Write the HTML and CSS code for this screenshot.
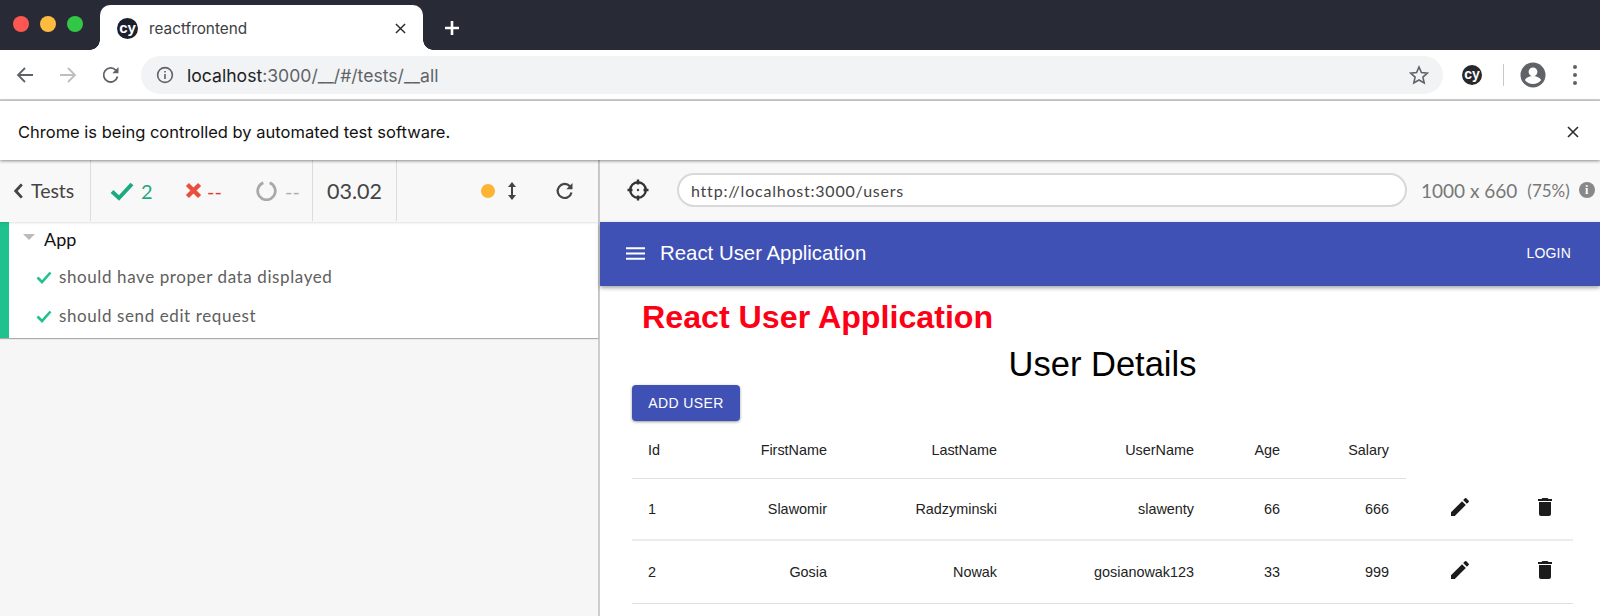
FILE: index.html
```html
<!DOCTYPE html>
<html lang="en">
<head>
<meta charset="utf-8">
<title>reactfrontend</title>
<link rel="stylesheet" href="styles.css">
</head>
<body>
<header class="tabstrip">
  <div class="lights"><i class="light red"></i><i class="light amber"></i><i class="light green"></i></div>
  <div class="tab">
    <span class="cy fav">cy</span>
    <span class="tab-title">reactfrontend</span>
    <svg class="tab-x" viewBox="0 0 12 12"><path d="M1 1l10 10M11 1L1 11"/></svg>
  </div>
  <svg class="plus" viewBox="0 0 16 16"><path d="M8 1v14M1 8h14"/></svg>
</header>
<div class="toolbar">
  <svg class="nav-ic" viewBox="0 0 20 20"><path d="M18 10H3M10 3l-7 7 7 7"/></svg>
  <svg class="nav-ic off" viewBox="0 0 20 20"><path d="M2 10h15M10 3l7 7-7 7"/></svg>
  <svg class="nav-ic" viewBox="0 0 20 20"><path d="M16.500 11.500a7 7 0 1 1-1.600-6.200"/><path class="fill" d="M17.500 2v6.200h-6.200z"/></svg>
  <div class="omnibox">
    <svg class="info" viewBox="0 0 20 20"><circle cx="10" cy="10" r="8.200"/><path d="M10 9v5.500M10 5.500v1.700"/></svg>
    <span class="url"><b>localhost</b>:3000/__/#/tests/__all</span>
    <svg class="star" viewBox="0 0 20 20"><path d="M10 2l2.400 5.500 6 .6-4.500 4 1.300 5.900-5.200-3-5.200 3 1.300-5.900-4.500-4 6-.6z"/></svg>
  </div>
  <span class="cy ext">cy</span>
  <i class="tool-sep"></i>
  <svg class="avatar" viewBox="0 0 26 26"><circle class="av-bg" cx="13" cy="13" r="12.500"/><circle class="av-fg" cx="13" cy="9.800" r="4.400"/><path class="av-fg" d="M4.800 18c2-3 5-4 8.200-4s6.200 1 8.200 4c-2 2.600-5 4-8.200 4s-6.200-1.400-8.200-4z"/></svg>
  <div class="dots"><i></i><i></i><i></i></div>
</div>
<div class="infobar">
  <span>Chrome is being controlled by automated test software.</span>
  <svg class="info-x" viewBox="0 0 12 12"><path d="M1 1l10 10M11 1L1 11"/></svg>
</div>
<main class="cypress">
  <section class="runner">
    <div class="stats">
      <div class="cell back">
        <svg class="chev" viewBox="0 0 10 16"><path d="M8 2L2.500 8 8 14"/></svg>
        <span>Tests</span>
      </div>
      <div class="cell counts">
        <svg class="st-check" viewBox="0 0 24 20"><path d="M2 10.500l7 6.500L22 3"/></svg>
        <span class="n-pass">2</span>
        <svg class="st-x" viewBox="0 0 14 14"><path d="M2 2l10 10M12 2L2 12"/></svg>
        <span class="n-fail">--</span>
        <svg class="st-spin" viewBox="0 0 20 20"><path d="M7 2.600a8.400 8.400 0 1 0 6 0"/></svg>
        <span class="n-pend">--</span>
      </div>
      <div class="cell time">03.02</div>
      <div class="cell controls">
        <i class="dot"></i>
        <svg class="updown" viewBox="0 0 10 20"><path class="fill" d="M5 1l4 5H1zM5 19l4-5H1z"/><path d="M5 5v10"/></svg>
        <svg class="rerun" viewBox="0 0 20 20"><path d="M16.500 11.500a7 7 0 1 1-1.600-6.200"/><path class="fill" d="M17.500 2v6.200h-6.200z"/></svg>
      </div>
    </div>
    <div class="suite">
      <div class="suite-head"><i class="caret"></i><span>App</span></div>
      <div class="test"><svg class="t-check" viewBox="0 0 16 14"><path d="M1.500 7.500l4.500 4.500L14.500 2.500"/></svg><span>should have proper data displayed</span></div>
      <div class="test"><svg class="t-check" viewBox="0 0 16 14"><path d="M1.500 7.500l4.500 4.500L14.500 2.500"/></svg><span>should send edit request</span></div>
    </div>
  </section>
  <section class="preview">
    <div class="aut-bar">
      <svg class="target" viewBox="0 0 22 22"><circle cx="11" cy="11" r="7.800"/><path d="M11 0.500v5M11 16.500v5M0.500 11h5M16.500 11h5"/><circle class="fill" cx="11" cy="11" r="1.200"/></svg>
      <div class="aut-url">http://localhost:3000/users</div>
      <span class="dims">1000 x 660</span>
      <span class="scale">(75%)</span>
      <span class="i-badge">i</span>
    </div>
    <div class="app">
      <div class="appbar">
        <svg class="burger" viewBox="0 0 19 13"><path d="M0 1.250h19M0 6.500h19M0 11.750h19"/></svg>
        <span class="app-title">React User Application</span>
        <span class="login">LOGIN</span>
      </div>
      <div class="content">
        <h1 class="brand">React User Application</h1>
        <h2 class="details">User Details</h2>
        <button class="add">ADD USER</button>
        <table class="users">
          <thead>
            <tr><th class="c-id">Id</th><th class="c-first">FirstName</th><th class="c-last">LastName</th><th class="c-user">UserName</th><th class="c-age">Age</th><th class="c-sal">Salary</th></tr>
          </thead>
          <tbody>
            <tr>
              <td class="c-id">1</td><td>Slawomir</td><td>Radzyminski</td><td>slawenty</td><td>66</td><td>666</td>
              <td class="c-edit"><svg class="act" viewBox="0 0 24 24"><path d="M3 17.250V21h3.750L17.810 9.940l-3.750-3.750L3 17.250zM20.710 7.040a1 1 0 0 0 0-1.410l-2.340-2.340a1 1 0 0 0-1.410 0l-1.830 1.830 3.750 3.750 1.830-1.830z"/></svg></td>
              <td class="c-del"><svg class="act" viewBox="0 0 24 24"><path d="M6 19c0 1.100.9 2 2 2h8c1.100 0 2-.9 2-2V7H6v12zM19 4h-3.500l-1-1h-5l-1 1H5v2h14V4z"/></svg></td>
            </tr>
            <tr>
              <td class="c-id">2</td><td>Gosia</td><td>Nowak</td><td>gosianowak123</td><td>33</td><td>999</td>
              <td class="c-edit"><svg class="act" viewBox="0 0 24 24"><path d="M3 17.250V21h3.750L17.810 9.940l-3.750-3.750L3 17.250zM20.710 7.040a1 1 0 0 0 0-1.410l-2.340-2.340a1 1 0 0 0-1.410 0l-1.830 1.830 3.750 3.750 1.830-1.830z"/></svg></td>
              <td class="c-del"><svg class="act" viewBox="0 0 24 24"><path d="M6 19c0 1.100.9 2 2 2h8c1.100 0 2-.9 2-2V7H6v12zM19 4h-3.500l-1-1h-5l-1 1H5v2h14V4z"/></svg></td>
            </tr>
          </tbody>
        </table>
      </div>
    </div>
  </section>
</main>
</body>
</html>
```
FILE: styles.css
```css
* { box-sizing: border-box; }
html, body { margin: 0; height: 616px; overflow: hidden; }
body { background: #fff; font-family: Inter, "Liberation Sans", sans-serif; display: flex; flex-direction: column; }
svg { display: block; flex: none; fill: none; }
i { display: block; flex: none; }

/* tab strip */
.tabstrip { height: 50px; background: #282a35; display: flex; align-items: flex-end; flex: none; }
.lights { width: 100px; height: 50px; display: flex; gap: 11px; padding: 16px 0 0 13px; }
.light { width: 16px; height: 16px; border-radius: 50%; }
.red { background: #fc5753; }
.amber { background: #fdbc40; }
.green { background: #33c748; }
.tab { position: relative; width: 323px; height: 45px; background: #fff; border-radius: 10px 10px 0 0; display: flex; align-items: center; padding: 1px 0 0 17px; }
.tab::before, .tab::after { content: ""; position: absolute; bottom: 0; width: 10px; height: 10px; background: radial-gradient(circle at 0 0, #282a35 9.500px, #fff 10px); }
.tab::before { left: -10px; }
.tab::after { right: -10px; background: radial-gradient(circle at 100% 0, #282a35 9.500px, #fff 10px); }
.cy { display: flex; align-items: center; justify-content: center; border-radius: 50%; background: #1b1e2e; color: #fff; font-family: "Liberation Sans", sans-serif; font-weight: 700; flex: none; }
.fav { width: 21px; height: 21px; font-size: 15px; padding-bottom: 2px; }
.tab-title { margin-left: 11px; font-size: 15.300px; color: #3c4043; flex: 1; }
.tab-x { width: 11px; height: 11px; margin-right: 17px; stroke: #2a2c30; stroke-width: 1.600; }
.plus { width: 16px; height: 16px; margin: 0 0 14px 21px; stroke: #fff; stroke-width: 2.600; }

/* toolbar */
.toolbar { height: 51px; flex: none; display: flex; align-items: center; border-bottom: 2px solid #cfcfcf; padding: 1px 0 0 15px; }
.nav-ic { width: 20px; height: 20px; margin-right: 23px; stroke: #5f6368; stroke-width: 1.800; }
.nav-ic.off { stroke: #bcbec1; }
.nav-ic .fill { fill: #5f6368; stroke: none; }
.omnibox { width: 1302px; height: 38px; margin-left: -3px; border-radius: 19px; background: #f1f3f4; display: flex; align-items: center; padding: 0 14px 0 15px; }
.info { width: 18px; height: 18px; stroke: #5f6368; stroke-width: 1.800; }
.url { margin-left: 13px; font-size: 17.600px; color: #5f6368; flex: 1; }
.url b { font-weight: 400; color: #202124; }
.star { width: 20px; height: 20px; stroke: #5f6368; stroke-width: 1.600; }
.ext { width: 20px; height: 20px; margin-left: 19px; font-size: 14px; padding-bottom: 2px; background: #26282e; }
.tool-sep { width: 1px; height: 22px; margin-left: 21px; background: #c8c8c8; }
.avatar { width: 26px; height: 26px; margin-left: 16px; }
.av-bg { fill: #5f6368; }
.av-fg { fill: #fff; }
.dots { margin-left: 27px; display: flex; flex-direction: column; gap: 4px; }
.dots i { width: 4px; height: 4px; border-radius: 50%; background: #5f6368; }

/* infobar */
.infobar { height: 59px; flex: none; display: flex; align-items: center; justify-content: space-between; padding: 2px 21px 0 18px; font-size: 16.500px; color: #111; position: relative; z-index: 2; box-shadow: 0 1px 3px rgba(0,0,0,.45); background: #fff; }
.info-x { width: 12px; height: 12px; stroke: #2a2c30; stroke-width: 1.600; }

/* cypress shell */
.cypress { flex: 1; display: flex; min-height: 0; background: #f6f6f6; font-family: Lato, "Liberation Sans", sans-serif; }
.runner { width: 600px; flex: none; border-right: 2px solid #cdcdcd; }
.stats { height: 62px; display: flex; background: #f8f8f8; color: #444; box-shadow: 0 1px 2px rgba(0,0,0,.12); position: relative; }
.cell { display: flex; align-items: center; height: 61px; border-right: 1px solid #dcdcdc; }
.back { width: 91px; padding-left: 13px; font-size: 19.500px; }
.chev { width: 11px; height: 18px; margin-right: 7px; stroke: #444; stroke-width: 2.600; }
.counts { width: 222px; padding-left: 19px; font-size: 20px; }
.st-check { width: 24px; height: 20px; stroke: #1fa97e; stroke-width: 4; }
.n-pass { margin-left: 7px; color: #1fa97e; width: 44px; }
.st-x { width: 17px; height: 17px; stroke: #e94f3d; stroke-width: 3.600; }
.n-fail { margin-left: 5px; color: #e53935; width: 49px; }
.st-spin { width: 21px; height: 21px; stroke: #a9a9a9; stroke-width: 2.600; }
.n-pend { margin-left: 8px; color: #b0b0b0; }
.time { width: 84px; padding-left: 14px; font-size: 21.500px; }
.controls { flex: 1; border-right: 0; padding-left: 84px; }
.dot { width: 14px; height: 14px; border-radius: 50%; background: #fdb333; }
.updown { width: 10px; height: 20px; margin-left: 12px; stroke: #444; stroke-width: 2; }
.updown .fill, .rerun .fill, .target .fill { fill: #444; stroke: none; }
.rerun { width: 20px; height: 20px; margin-left: 38px; stroke: #444; stroke-width: 2.200; }
.suite { height: 116px; background: #fff; border-left: 9px solid #1fc18c; box-shadow: 0 1px 1px rgba(0,0,0,.3); }
.suite-head { height: 34px; display: flex; align-items: center; padding: 0 0 1px 14px; font-size: 18px; color: #111; }
.caret { width: 0; height: 0; border: 6px solid transparent; border-top: 6px solid #bbb; border-bottom: 0; margin: 0 9px 3px 0; }
.test { height: 39px; display: flex; align-items: center; padding: 2px 0 0 27px; font-size: 17px; letter-spacing: .6px; color: #606060; }
.t-check { width: 16px; height: 14px; margin-right: 7px; stroke: #1fc18c; stroke-width: 2.600; }

/* preview */
.preview { flex: 1; min-width: 0; display: flex; flex-direction: column; background: #fff; }
.aut-bar { height: 62px; flex: none; background: #f8f8f8; display: flex; align-items: center; padding: 0 0 2px 27px; color: #777; }
.target { width: 22px; height: 22px; stroke: #333; stroke-width: 2.400; }
.aut-url { width: 730px; height: 34px; margin-left: 28px; background: #fff; border: 2px solid #d8d8d8; border-radius: 17px; display: flex; align-items: center; padding-left: 12px; font-size: 16px; color: #444; letter-spacing: .78px; }
.dims { margin-left: 14px; font-size: 19px; }
.scale { margin-left: 10px; font-size: 17px; }
.i-badge { width: 16px; height: 16px; margin-left: 9px; border-radius: 50%; background: #888; color: #fff; font: 700 12px/16px "Liberation Serif", serif; text-align: center; }
.app { flex: 1; min-height: 0; font-family: "Liberation Sans", sans-serif; }
.appbar { height: 64px; background: #3f51b5; color: #fff; display: flex; align-items: center; padding: 0 29px 2px 26px; box-shadow: 0 2px 4px rgba(0,0,0,.35); position: relative; }
.burger { width: 19px; height: 13px; stroke: #fff; stroke-width: 1.800; }
.app-title { margin-left: 15px; font-size: 20.400px; flex: 1; }
.login { font-size: 14px; letter-spacing: .2px; }
.content { padding: 0 27px 0 32px; }
.brand { margin: 13px 0 0 10px; font-size: 32.200px; line-height: 36px; color: #fd0016; font-weight: 700; }
.details { margin: 9px 0 0; font-size: 34.500px; line-height: 40px; font-weight: 400; color: #000; text-align: center; }
.add { display: block; width: 108px; height: 36px; margin: 1px 0 1px; border: 0; border-radius: 4px; background: #3f51b5; color: #fff; font: 14px "Liberation Sans", sans-serif; letter-spacing: .4px; box-shadow: 0 1px 3px rgba(0,0,0,.4); padding: 0; }
.users { width: 941px; border-collapse: collapse; table-layout: fixed; font-size: 14.400px; color: #222; }
.users th { height: 56px; font-weight: 400; text-align: right; padding: 0 17px 0 0; border-bottom: 1px solid #e0e0e0; }
.users td { text-align: right; padding: 1px 17px 0 0; border-bottom: 2px solid #ececec; }
.users tbody tr { height: 62px; }
.users tbody tr:last-child { height: 63px; }
.users tbody tr:last-child td { border-bottom-width: 1px; border-color: #e0e0e0; }
.users .c-id { width: 69px; text-align: left; padding: 0 0 0 16px; }
.c-first { width: 143px; }
.c-last { width: 170px; }
.c-user { width: 197px; }
.c-age { width: 86px; }
.c-sal { width: 109px; }
.users .c-edit, .users .c-del { padding: 0 0 4px; }
.act { width: 24px; height: 24px; fill: #1c1c1c; margin: 0 auto; }
.users .c-edit .act { margin-left: 42px; }
.users .c-del .act { margin-left: 43px; }
```
